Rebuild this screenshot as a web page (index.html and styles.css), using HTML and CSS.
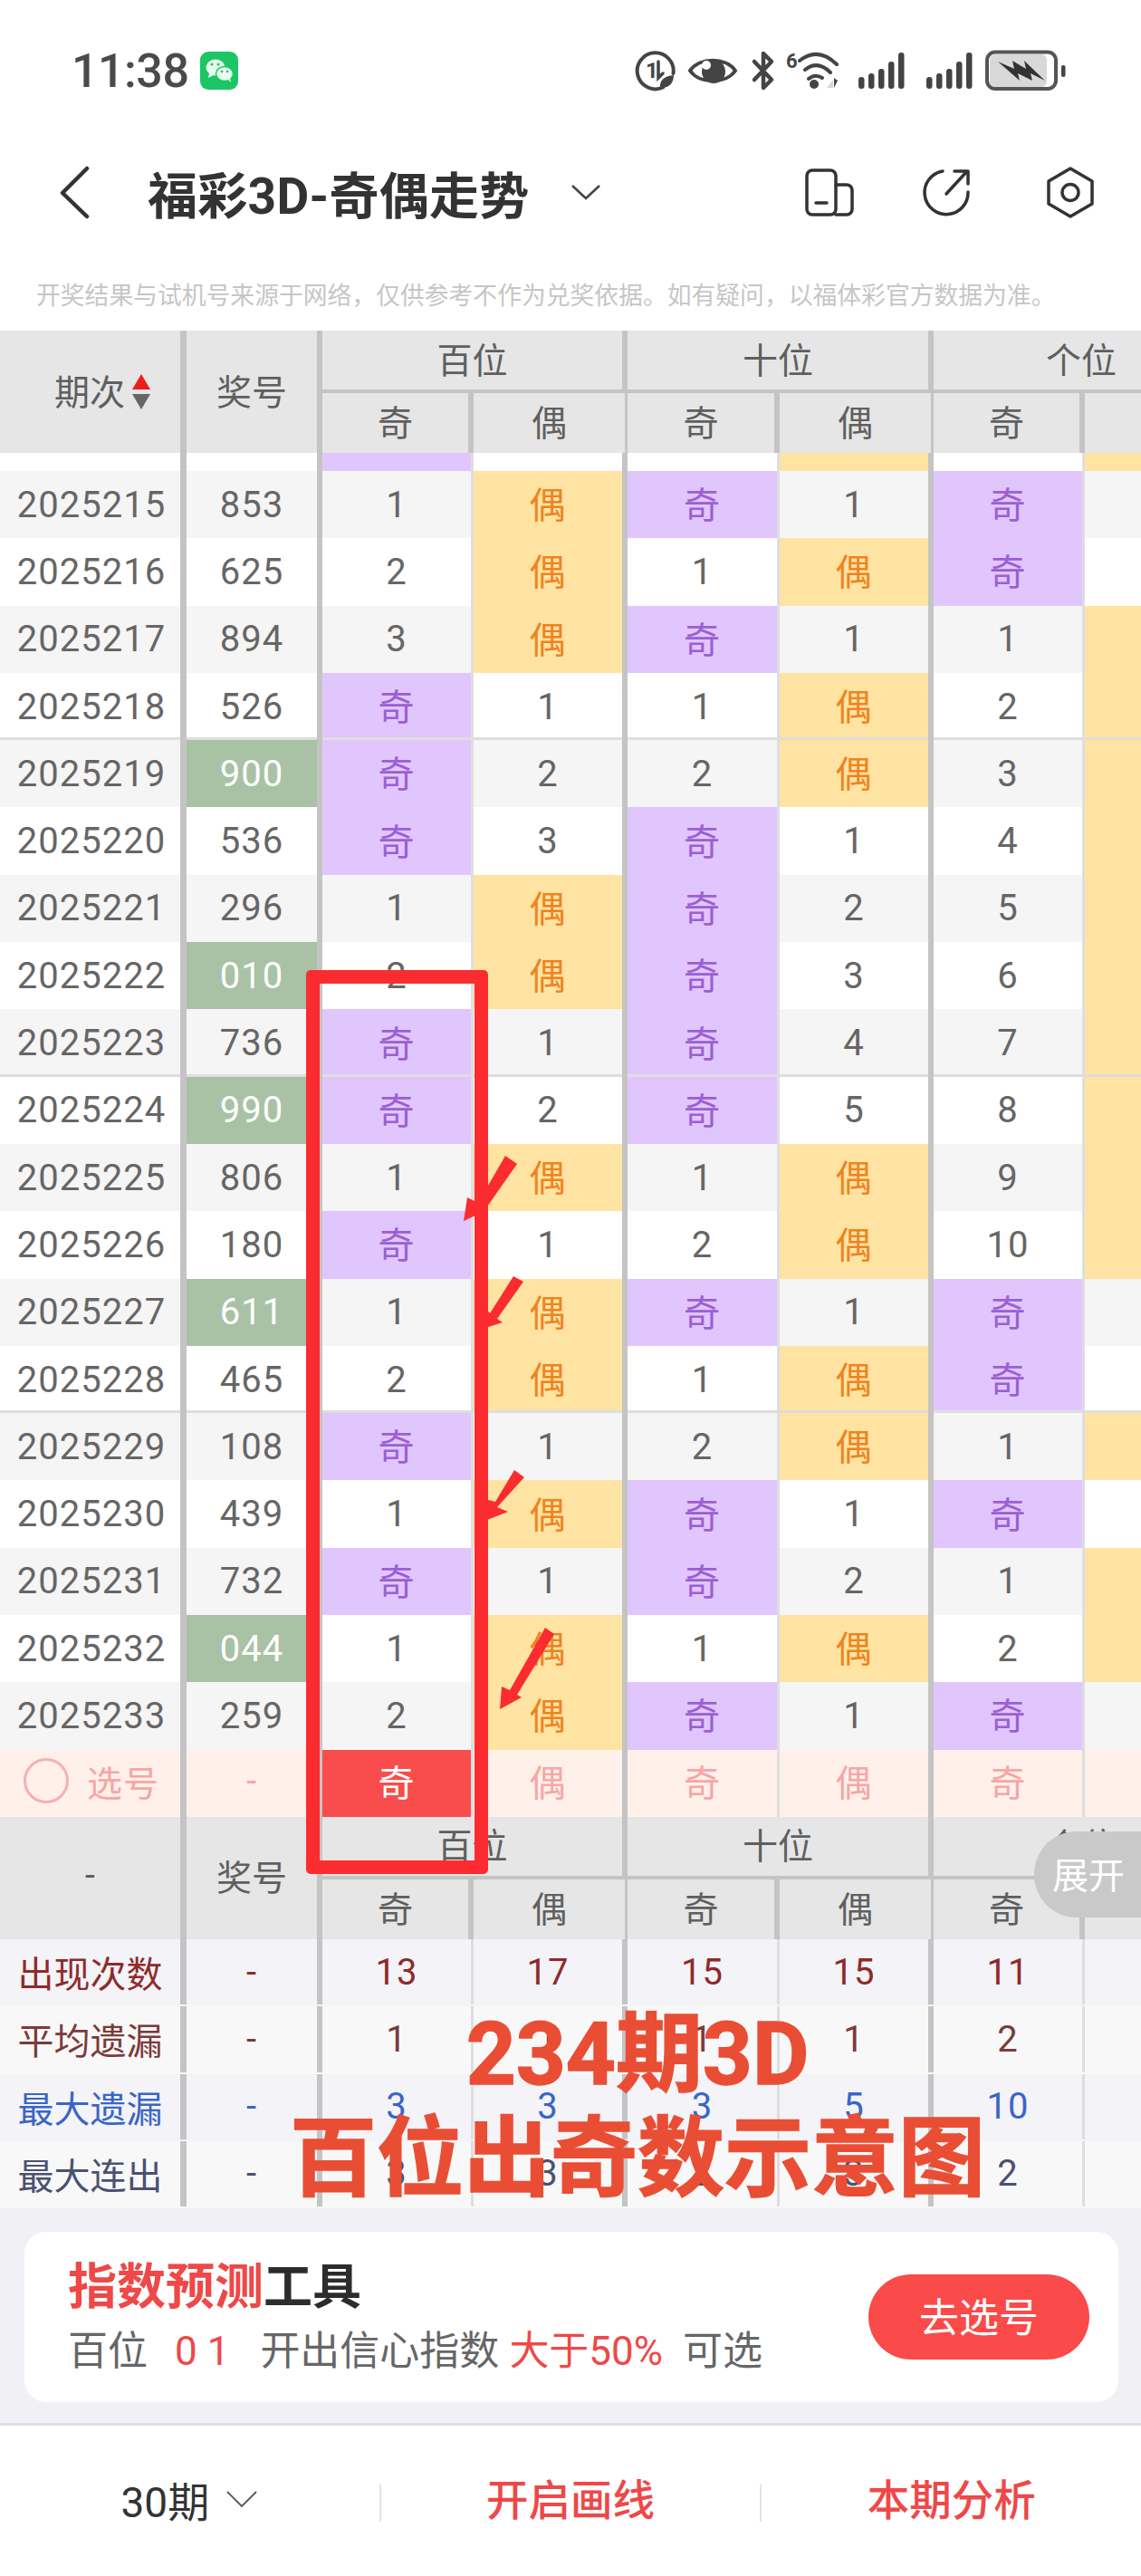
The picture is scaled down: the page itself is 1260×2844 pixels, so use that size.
FILE: index.html
```html
<!DOCTYPE html>
<html lang="zh-CN">
<head>
  <meta charset="UTF-8" />
  <meta name="viewport" content="width=device-width, initial-scale=1.0">
  <title>福彩3D-奇偶走势</title>
  <link rel="stylesheet" href="styles.css">
</head>
<body>
  <div class="status-bar">
    <span class="time">11:38</span>
    <svg class="wechat" viewBox="221 58 42 42">
      <rect x="221" y="58" width="42" height="42" rx="9" fill="#1cc665"/>
      <ellipse cx="238" cy="75.500" rx="10.500" ry="9" fill="#e9fbf0"/>
      <path d="M231 82l-1 5 6-3z" fill="#e9fbf0"/>
      <ellipse cx="248" cy="82.500" rx="9.500" ry="8" fill="#e9fbf0" stroke="#1cc665" stroke-width="1.500"/>
      <path d="M252 89l3 3-1-5z" fill="#e9fbf0"/>
      <circle cx="234" cy="72" r="1.500" fill="#1cc665"/><circle cx="241" cy="72" r="1.500" fill="#1cc665"/>
      <circle cx="245" cy="80" r="1.300" fill="#1cc665"/><circle cx="251" cy="80" r="1.300" fill="#1cc665"/>
    </svg>
    <svg class="status-icons" viewBox="700 54 480 48">
      <g fill="none" stroke="#444" stroke-linecap="round">
        <path d="M732 96.500A20 20 0 1 1 743.500 81" stroke-width="4"/>
        <path d="M727 68V86l5-5" stroke-width="3.500"/>
        <path d="M762 78C772 63 802 63 812 78C802 93 772 93 762 78Z" stroke-width="4"/>
        <path d="M833 68L852 88L843 97V59L852 68L833 88" stroke-width="4.500" stroke-linejoin="round"/>
        <path d="M883 67Q903 51 924 71M889 77Q903 66 917 80M893 87Q900 81 908 86" stroke-width="4"/>
      </g>
      <g fill="#444">
        <text x="713" y="86" class="status-num">1</text>
        <path d="M729 97C728 88 734 84 744 83C744 92 738 98 729 97Z"/>
        <circle cx="788" cy="79" r="13"/>
        <text x="868" y="75" class="status-six">6</text>
        <circle cx="899" cy="93" r="5"/>
        <path d="M921 86v11l4-8z"/>
        <rect x="948" y="85" width="6.500" height="13" rx="3"/><rect x="959" y="81" width="6.500" height="17" rx="3"/><rect x="970" y="76" width="6.500" height="22" rx="3"/><rect x="981" y="68" width="6.500" height="30" rx="3"/><rect x="992" y="58" width="6.500" height="40" rx="3"/>
        <rect x="1023" y="85" width="6.500" height="13" rx="3"/><rect x="1034" y="81" width="6.500" height="17" rx="3"/><rect x="1045" y="76" width="6.500" height="22" rx="3"/><rect x="1056" y="68" width="6.500" height="30" rx="3"/><rect x="1067" y="58" width="6.500" height="40" rx="3"/>
        <rect x="1172" y="72" width="4.500" height="13" rx="2"/>
      </g>
      <circle cx="780" cy="72" r="5" fill="#fff"/>
      <path d="M913 97l7-9v9z" fill="#d6d6d6"/>
      <rect x="1090" y="57.500" width="76" height="40.500" rx="9" fill="#fff" stroke="#555" stroke-width="4"/>
      <rect x="1093" y="60" width="63" height="36" rx="6" fill="#d8d8d8"/>
      <path d="M1102 68L1120 76L1118 67L1133 76L1131 67L1154 89L1138 81L1140 89L1124 81L1126 89Z" fill="#333"/>
    </svg>
  </div>

  <div class="nav-bar">
    <svg class="back" viewBox="0 0 40 60"><path d="M32 4L5 31L32 57" fill="none" stroke="#333" stroke-width="4.500" stroke-linecap="round" stroke-linejoin="round"/></svg>
    <h1 class="title">福彩3D-奇偶走势</h1>
    <svg class="title-arrow" viewBox="0 0 36 20"><path d="M3 3L18 17L33 3" fill="none" stroke="#444" stroke-width="2.500"/></svg>
    <svg class="nav-actions" viewBox="880 180 340 64">
      <g fill="none" stroke="#333" stroke-width="3.500" stroke-linecap="round" stroke-linejoin="round">
        <rect x="891" y="188" width="32" height="49" rx="6"/>
        <path d="M923 204H935a6 6 0 0 1 6 6V231a6 6 0 0 1 -6 6H923M901 224H913"/>
        <path d="M1041 189A24 24 0 1 0 1069 212M1045 214L1068 189M1054 189H1069V203"/>
        <path d="M1182 186L1206 200V225L1182 239L1158 225V200Z"/>
        <circle cx="1182" cy="212.500" r="9"/>
      </g>
    </svg>
  </div>

  <p class="note">开奖结果与试机号来源于网络&#65292;仅供参考不作为兑奖依据。如有疑问&#65292;以福体彩官方数据为准。</p>

  <div class="table">
    <div class="thead">
      <div class="th-side th-period">期次<span class="sort"><i class="up"></i><i class="down"></i></span></div>
      <div class="th-side">奖号</div>
      <div class="th-group">百位</div><div class="th-group">十位</div><div class="th-group">个位</div>
      <div class="th-sub">奇</div><div class="th-sub">偶</div><div class="th-sub">奇</div><div class="th-sub">偶</div><div class="th-sub">奇</div><div class="th-sub"></div>
    </div>

    <div class="row row-cut"><div class="cell"></div><div class="cell"></div><div class="cell odd"></div><div class="cell"></div><div class="cell"></div><div class="cell even"></div><div class="cell"></div><div class="cell even"></div></div>

    <div class="row alt"><div class="cell">2025215</div><div class="cell">853</div><div class="cell">1</div><div class="cell even">偶</div><div class="cell odd">奇</div><div class="cell">1</div><div class="cell odd">奇</div><div class="cell"></div></div>
    <div class="row"><div class="cell">2025216</div><div class="cell">625</div><div class="cell">2</div><div class="cell even">偶</div><div class="cell">1</div><div class="cell even">偶</div><div class="cell odd">奇</div><div class="cell"></div></div>
    <div class="row alt"><div class="cell">2025217</div><div class="cell">894</div><div class="cell">3</div><div class="cell even">偶</div><div class="cell odd">奇</div><div class="cell">1</div><div class="cell">1</div><div class="cell even"></div></div>
    <div class="row sep"><div class="cell">2025218</div><div class="cell">526</div><div class="cell odd">奇</div><div class="cell">1</div><div class="cell">1</div><div class="cell even">偶</div><div class="cell">2</div><div class="cell even"></div></div>
    <div class="row alt"><div class="cell">2025219</div><div class="cell win">900</div><div class="cell odd">奇</div><div class="cell">2</div><div class="cell">2</div><div class="cell even">偶</div><div class="cell">3</div><div class="cell even"></div></div>
    <div class="row"><div class="cell">2025220</div><div class="cell">536</div><div class="cell odd">奇</div><div class="cell">3</div><div class="cell odd">奇</div><div class="cell">1</div><div class="cell">4</div><div class="cell even"></div></div>
    <div class="row alt"><div class="cell">2025221</div><div class="cell">296</div><div class="cell">1</div><div class="cell even">偶</div><div class="cell odd">奇</div><div class="cell">2</div><div class="cell">5</div><div class="cell even"></div></div>
    <div class="row"><div class="cell">2025222</div><div class="cell win">010</div><div class="cell">2</div><div class="cell even">偶</div><div class="cell odd">奇</div><div class="cell">3</div><div class="cell">6</div><div class="cell even"></div></div>
    <div class="row alt sep"><div class="cell">2025223</div><div class="cell">736</div><div class="cell odd">奇</div><div class="cell">1</div><div class="cell odd">奇</div><div class="cell">4</div><div class="cell">7</div><div class="cell even"></div></div>
    <div class="row"><div class="cell">2025224</div><div class="cell win">990</div><div class="cell odd">奇</div><div class="cell">2</div><div class="cell odd">奇</div><div class="cell">5</div><div class="cell">8</div><div class="cell even"></div></div>
    <div class="row alt"><div class="cell">2025225</div><div class="cell">806</div><div class="cell">1</div><div class="cell even">偶</div><div class="cell">1</div><div class="cell even">偶</div><div class="cell">9</div><div class="cell even"></div></div>
    <div class="row"><div class="cell">2025226</div><div class="cell">180</div><div class="cell odd">奇</div><div class="cell">1</div><div class="cell">2</div><div class="cell even">偶</div><div class="cell">10</div><div class="cell even"></div></div>
    <div class="row alt"><div class="cell">2025227</div><div class="cell win">611</div><div class="cell">1</div><div class="cell even">偶</div><div class="cell odd">奇</div><div class="cell">1</div><div class="cell odd">奇</div><div class="cell"></div></div>
    <div class="row sep"><div class="cell">2025228</div><div class="cell">465</div><div class="cell">2</div><div class="cell even">偶</div><div class="cell">1</div><div class="cell even">偶</div><div class="cell odd">奇</div><div class="cell"></div></div>
    <div class="row alt"><div class="cell">2025229</div><div class="cell">108</div><div class="cell odd">奇</div><div class="cell">1</div><div class="cell">2</div><div class="cell even">偶</div><div class="cell">1</div><div class="cell even"></div></div>
    <div class="row"><div class="cell">2025230</div><div class="cell">439</div><div class="cell">1</div><div class="cell even">偶</div><div class="cell odd">奇</div><div class="cell">1</div><div class="cell odd">奇</div><div class="cell"></div></div>
    <div class="row alt"><div class="cell">2025231</div><div class="cell">732</div><div class="cell odd">奇</div><div class="cell">1</div><div class="cell odd">奇</div><div class="cell">2</div><div class="cell">1</div><div class="cell even"></div></div>
    <div class="row"><div class="cell">2025232</div><div class="cell win">044</div><div class="cell">1</div><div class="cell even">偶</div><div class="cell">1</div><div class="cell even">偶</div><div class="cell">2</div><div class="cell even"></div></div>
    <div class="row alt"><div class="cell">2025233</div><div class="cell">259</div><div class="cell">2</div><div class="cell even">偶</div><div class="cell odd">奇</div><div class="cell">1</div><div class="cell odd">奇</div><div class="cell"></div></div>

    <div class="row row-pick">
      <div class="cell pick-label"><span class="pick-circle"></span>选号</div>
      <div class="cell">-</div><div class="cell picked">奇</div><div class="cell">偶</div><div class="cell">奇</div><div class="cell">偶</div><div class="cell">奇</div><div class="cell"></div>
    </div>

    <div class="thead">
      <div class="th-side">-</div>
      <div class="th-side">奖号</div>
      <div class="th-group">百位</div><div class="th-group">十位</div><div class="th-group">个位</div>
      <div class="th-sub">奇</div><div class="th-sub">偶</div><div class="th-sub">奇</div><div class="th-sub">偶</div><div class="th-sub">奇</div><div class="th-sub"></div>
    </div>

    <div class="row stat stat-count"><div class="cell">出现次数</div><div class="cell">-</div><div class="cell">13</div><div class="cell">17</div><div class="cell">15</div><div class="cell">15</div><div class="cell">11</div><div class="cell"></div></div>
    <div class="row stat stat-avg"><div class="cell">平均遗漏</div><div class="cell">-</div><div class="cell">1</div><div class="cell">1</div><div class="cell">1</div><div class="cell">1</div><div class="cell">2</div><div class="cell"></div></div>
    <div class="row stat stat-miss"><div class="cell">最大遗漏</div><div class="cell">-</div><div class="cell">3</div><div class="cell">3</div><div class="cell">3</div><div class="cell">5</div><div class="cell">10</div><div class="cell"></div></div>
    <div class="row stat stat-run"><div class="cell">最大连出</div><div class="cell">-</div><div class="cell">3</div><div class="cell">3</div><div class="cell">3</div><div class="cell">3</div><div class="cell">2</div><div class="cell"></div></div>
  </div>

  <div class="tool-area">
    <div class="tool-card">
      <div class="tool-text">
        <div class="tool-title"><span class="red">指数预测</span>工具</div>
        <div class="tool-desc">百位<span class="red tool-nums">0 1</span><span class="tool-mid">开出信心指数</span><span class="red tool-rate">大于50%</span><span class="tool-end">可选</span></div>
      </div>
      <button class="tool-btn">去选号</button>
    </div>
  </div>

  <div class="tab-bar">
    <div class="tab tab-period">30期<svg class="tab-arrow" viewBox="0 0 36 20"><path d="M2 2L18 18L34 2" fill="none" stroke="#555" stroke-width="1.800"/></svg></div>
    <span class="tab-line"></span>
    <div class="tab red">开启画线</div>
    <span class="tab-line"></span>
    <div class="tab red">本期分析</div>
  </div>

  <div class="expand">展开</div>

  <!-- hand drawn marks on top of the screenshot -->
  <div class="mark-box"></div>
  <svg class="mark-arrows" viewBox="0 0 1260 2844">
    <polygon points="558,1276 571,1285 536,1335 538,1336 512,1348 516,1322 528,1328"/>
    <polygon points="567,1409 578,1415 549,1456 555,1460 533,1467 533,1440 541,1450"/>
    <polygon points="568,1623 579,1631 549,1664 561,1669 533,1680 535,1655 547,1658"/>
    <polygon points="602,1797 612,1804 571,1871 576,1874 552,1887 554,1862 563,1866"/>
  </svg>
  <div class="mark-text">
    <div class="mark-line1">234期3D</div>
    <div class="mark-line2">百位出奇数示意图</div>
  </div>
</body>
</html>
```

FILE: styles.css
```css
* {
  box-sizing: border-box;
}

html, body {
  margin: 0;
  padding: 0;
}

body {
  position: relative;
  width: 1260px;
  height: 2844px;
  overflow: hidden;
  background: #fff;
  color: #666;
  font-family: Roboto, "Noto Sans CJK SC", sans-serif;
}

.red {
  color: #ee4848;
}

/* status bar */
.status-bar {
  display: flex;
  align-items: center;
  height: 156px;
  padding-left: 79px;
}

.time {
  font-size: 52px;
  font-weight: 500;
  color: #4a4a4a;
  letter-spacing: -0.5px;
}

.wechat {
  width: 42px;
  height: 42px;
  margin-left: 13px;
}

.status-icons {
  width: 480px;
  height: 48px;
  margin-left: auto;
  margin-right: 80px;
}

.status-num {
  font-size: 24px;
  font-weight: 700;
}

.status-six {
  font-size: 22px;
  font-weight: 700;
}

/* nav bar */
.nav-bar {
  display: flex;
  align-items: center;
  height: 112px;
  padding-left: 64px;
}

.back {
  width: 40px;
  height: 60px;
}

.title {
  margin: 0 0 0 59px;
  font-size: 55px;
  font-weight: 700;
  color: #333;
  letter-spacing: 0.3px;
  white-space: nowrap;
}

.title-arrow {
  width: 36px;
  height: 20px;
  margin-left: 44px;
}

.nav-actions {
  width: 340px;
  height: 64px;
  margin-left: auto;
  margin-right: 40px;
}

.note {
  display: flex;
  align-items: center;
  height: 97px;
  margin: 0;
  padding: 16px 0 0 40px;
  font-size: 26.8px;
  color: #c6c6c6;
  white-space: nowrap;
}

/* table */
.table {
  width: 1260px;
  overflow: hidden;
}

.thead, .row {
  display: grid;
  grid-template-columns: 206px 150px 167px 170px 168px 170px 167px 165px;
  width: 1363px;
}

.thead {
  grid-template-rows: 69px 66px;
  background: #e6e6e6;
  color: #5f5f5f;
  font-size: 39px;
}

.thead > div {
  display: flex;
  align-items: center;
  justify-content: center;
  padding-bottom: 6px;
}

.th-side {
  grid-row: 1 / 3;
  border-right: 7px solid #c4c4c4;
}

.th-side + .th-side {
  border-right-width: 6px;
}

.th-period {
  justify-content: flex-start !important;
  padding-left: 60px;
}

.sort {
  display: flex;
  flex-direction: column;
  gap: 5px;
  margin-left: 8px;
  padding-top: 6px;
}

.sort i {
  display: block;
  width: 0;
  height: 0;
  border-left: 10px solid transparent;
  border-right: 10px solid transparent;
}

.sort .up {
  border-bottom: 17px solid #ee1c1c;
}

.sort .down {
  border-top: 17px solid #666;
}

.th-group {
  grid-column: span 2;
  border-right: 6px solid #c4c4c4;
  border-bottom: 4px solid #c4c4c4;
}

.th-sub {
  border-right: 3px solid #c4c4c4;
}

.th-sub:nth-child(even) {
  border-right-width: 6px;
}

.row {
  height: 74.3px;
  background: #fff;
  font-size: 40px;
  letter-spacing: 1px;
}

.row.alt {
  background: #f5f5f5;
}

.row-cut {
  height: 20px;
}

.cell {
  display: flex;
  align-items: center;
  justify-content: center;
  border-right: 3px solid #dedede;
}

.cell:nth-child(1) {
  padding-left: 3px;
  border-right: 7px solid #c4c4c4;
}

.cell:nth-child(2), .cell:nth-child(4), .cell:nth-child(6) {
  border-right: 6px solid #c4c4c4;
}

.row.sep .cell {
  box-shadow: inset 0 -3px 0 #dedede;
}

.odd {
  background: #e1c6fd;
  color: #9b5fd3;
  padding-bottom: 4px;
}

.even {
  background: #ffe3a3;
  color: #ee8420;
  padding-bottom: 4px;
}

.win {
  background: #a9c2a5;
  color: #fff;
}

.row-pick {
  background: #fff0ea;
  color: #f6a6a6;
}

.row-pick .cell {
  padding-bottom: 5px;
}

.pick-label {
  justify-content: flex-start;
  padding-left: 26px !important;
  font-size: 39px;
}

.pick-circle {
  width: 50px;
  height: 50px;
  margin-right: 20px;
  border: 3px solid #f6b0b0;
  border-radius: 50%;
}

.picked {
  background: #f94c4c;
  color: #fff;
}

.stat {
  background: #f8f8f8;
  padding-bottom: 2px;
}

.stat-count, .stat-miss {
  background: #f3f3f8;
}

.stat-count {
  color: #8f2a2a;
}

.stat-avg {
  color: #7a3b3b;
}

.stat-miss {
  color: #3a66c4;
}

.stat-run {
  color: #4a5170;
}

.stat .cell:nth-child(1) {
  padding-left: 0;
  font-size: 40px;
  letter-spacing: 0;
}

/* tool card */
.tool-area {
  height: 240px;
  padding: 26px 25px 0 27px;
  background: #f0f0f5;
  border-bottom: 3px solid #dedede;
}

.tool-card {
  display: flex;
  align-items: center;
  justify-content: space-between;
  height: 188px;
  padding: 0 32px 0 48px;
  background: #fff;
  border-radius: 24px;
}

.tool-title {
  font-size: 54px;
  font-weight: 700;
  color: #2c2c2c;
  line-height: 72px;
}

.tool-desc {
  margin-top: 4px;
  font-size: 44px;
  color: #666;
  line-height: 60px;
  white-space: nowrap;
}

.tool-nums {
  margin-left: 30px;
}

.tool-mid {
  margin-left: 34px;
}

.tool-rate {
  margin-left: 11px;
}

.tool-end {
  margin-left: 22px;
}

.tool-btn {
  width: 244px;
  height: 94px;
  padding-bottom: 6px;
  border: none;
  border-radius: 47px;
  background: #fa4a4a;
  color: #fff;
  font-family: inherit;
  font-size: 44px;
}

/* bottom tabs */
.tab-bar {
  display: flex;
  align-items: center;
  height: 167px;
}

.tab {
  flex: 1;
  display: flex;
  align-items: center;
  justify-content: center;
  padding-bottom: 10px;
  font-size: 46.5px;
  font-weight: 500;
}

.tab-period {
  padding-bottom: 6px;
  font-size: 46px;
  font-weight: 400;
  color: #333;
}

.tab-arrow {
  width: 36px;
  height: 20px;
  margin-left: 18px;
}

.tab-line {
  width: 2px;
  height: 41px;
  margin-top: 3px;
  background: #e4e4e4;
}

/* over the content */
.expand {
  position: absolute;
  top: 2022px;
  left: 1142px;
  display: flex;
  align-items: center;
  justify-content: center;
  width: 118px;
  height: 95px;
  padding: 0 0 4px 2px;
  border-radius: 47px 0 0 47px;
  background: #c9c9c9;
  color: #fff;
  font-size: 40px;
}

.mark-box {
  position: absolute;
  top: 1071px;
  left: 338px;
  width: 201px;
  height: 998px;
  border: 15px solid #fb2c30;
  border-radius: 5px;
}

.mark-arrows {
  position: absolute;
  top: 0;
  left: 0;
  width: 1260px;
  height: 2844px;
  fill: #fb2c30;
}

.mark-text {
  position: absolute;
  top: 2212px;
  left: 300px;
  width: 808px;
  color: #e94e35;
  font-weight: 700;
  text-align: center;
  white-space: nowrap;
  -webkit-text-stroke: 1.5px #e94e35;
}

.mark-line1 {
  font-size: 96px;
  line-height: 112px;
}

.mark-line2 {
  font-size: 96px;
  line-height: 118px;
}
```
